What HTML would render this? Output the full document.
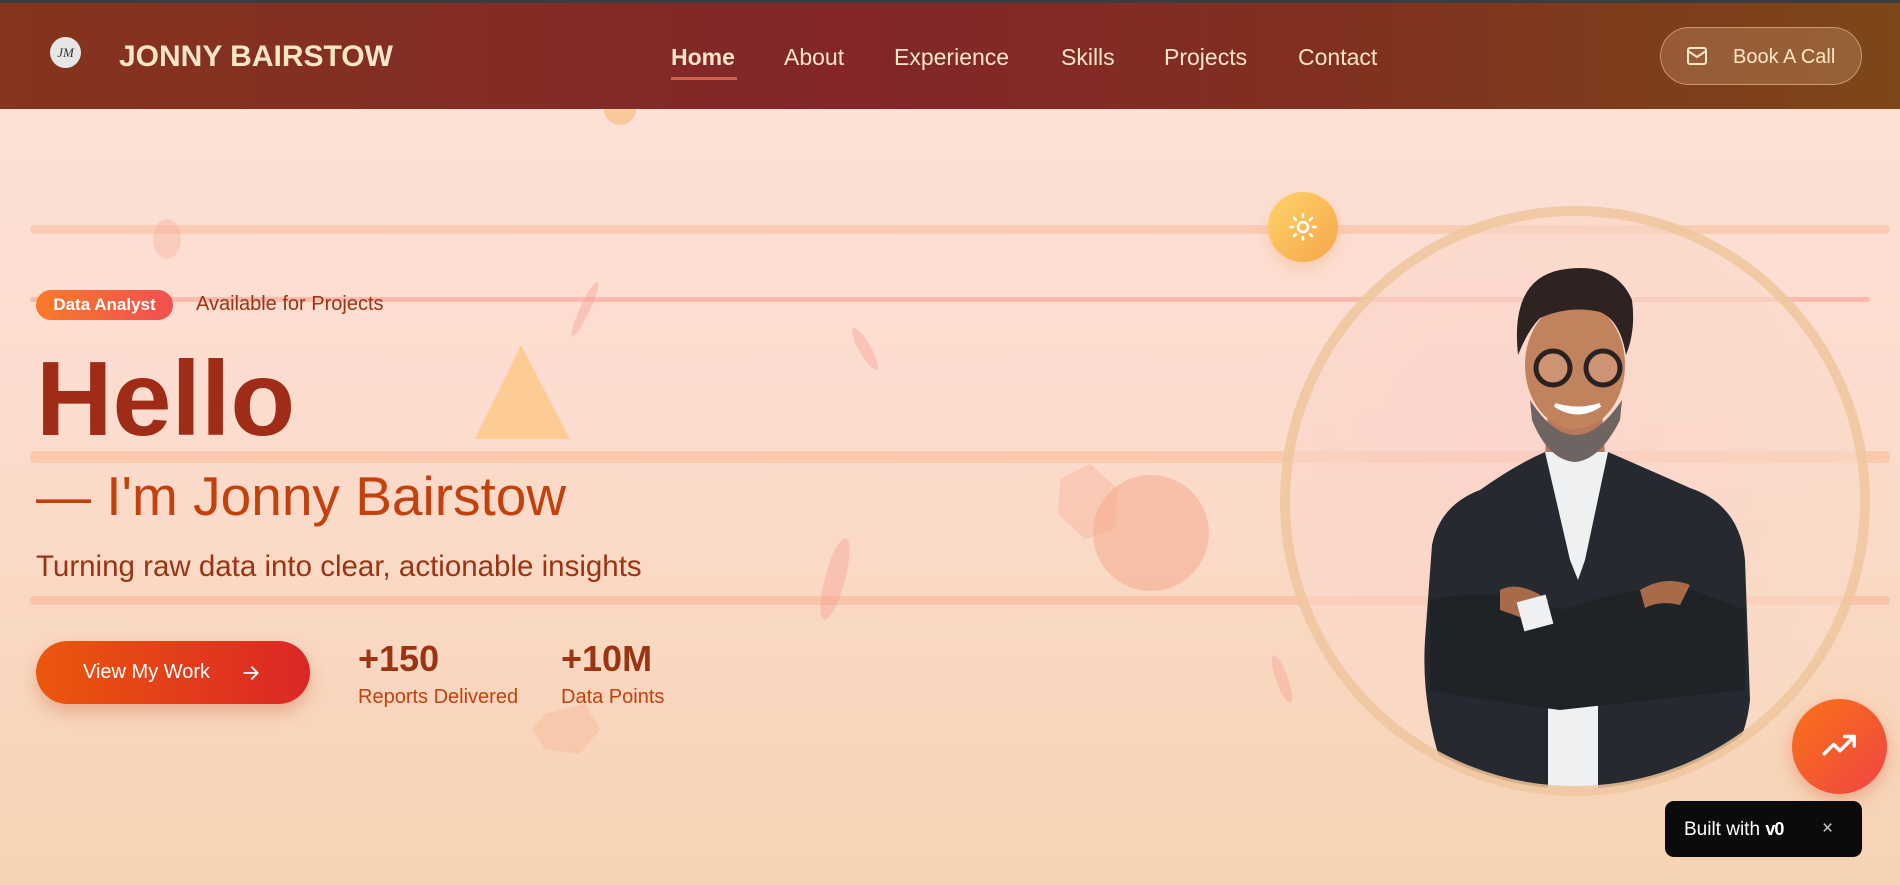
<!DOCTYPE html>
<html><head><meta charset="utf-8"><style>
*{margin:0;padding:0;box-sizing:border-box}
body{width:1900px;height:885px;overflow:hidden;font-family:"Liberation Sans",sans-serif;position:relative;background:linear-gradient(180deg,#fde2d8 0%,#fcdccf 45%,#f6d3b3 100%)}
.nav{position:absolute;left:0;top:0;width:1900px;height:109px;background:linear-gradient(90deg,#84351c 0%,#82262a 45%,#81301f 70%,#7c471a 100%);border-top:3px solid #3a3c40}
.nav .t{position:absolute;color:#fde6c6;font-size:23px;top:41px}
.ab{position:absolute}
.lh{line-height:1;white-space:nowrap}
.line{position:absolute;left:30px;height:9px;background:rgba(246,170,120,.35);border-radius:4px}
</style></head><body>
<div class="nav">
 <div class="ab" style="left:50px;top:34px;width:31px;height:31px;border-radius:50%;background:#e6e6e6;color:#333;font:italic 13px 'Liberation Serif',serif;text-align:center;line-height:31px">JM</div>
 <div class="ab" style="left:119px;top:37px;color:#fde6c6;font-size:30px;font-weight:bold">JONNY BAIRSTOW</div>
 <div class="t" style="left:671px;font-weight:bold">Home</div>
 <div class="ab" style="left:671px;top:74px;width:66px;height:3px;background:#d0614a"></div>
 <div class="t" style="left:784px">About</div>
 <div class="t" style="left:894px">Experience</div>
 <div class="t" style="left:1061px">Skills</div>
 <div class="t" style="left:1164px">Projects</div>
 <div class="t" style="left:1298px">Contact</div>
 <div class="ab" style="left:1660px;top:24px;width:202px;height:58px;border-radius:29px;background:rgba(255,210,170,.2);border:1px solid rgba(240,190,140,.6)">
  <svg class="ab" style="left:25px;top:18px" width="22" height="20" viewBox="0 0 22 20"><rect x="2" y="2" width="18" height="16" rx="2" fill="none" stroke="#fde6c6" stroke-width="2"/><path d="M2 5l9 6 9-6" fill="none" stroke="#fde6c6" stroke-width="2"/></svg>
  <div class="ab" style="left:72px;top:18px;color:#fde6c6;font-size:20px">Book A Call</div>
 </div>
</div>
<div class="line" style="top:225px;width:1860px"></div>
<div class="line" style="top:297px;height:5px;background:rgba(240,120,110,.35);width:1840px"></div>
<div class="line" style="top:451px;height:12px;width:1860px"></div>
<div class="line" style="top:596px;width:1860px;background:rgba(246,160,120,.35)"></div>
<svg class="ab" style="left:0;top:109px" width="1900" height="776">
 <polygon points="521,236 475,330 570,330" fill="#fbc98a" opacity=".85"/>
 <circle cx="1151" cy="424" r="58" fill="#f3a080" opacity=".45"/>
 <polygon points="1060,370 1090,355 1118,380 1115,420 1085,430 1058,405" fill="#f5a890" opacity=".35"/>
 <polygon points="545,605 585,595 600,620 580,645 545,640 532,620" fill="#f5b090" opacity=".35"/>
 <ellipse cx="585" cy="200" rx="5" ry="30" transform="rotate(25 585 200)" fill="#f5a090" opacity=".4"/>
 <ellipse cx="865" cy="240" rx="6" ry="24" transform="rotate(-30 865 240)" fill="#f5a090" opacity=".4"/>
 <ellipse cx="835" cy="470" rx="10" ry="42" transform="rotate(15 835 470)" fill="#f5a090" opacity=".4"/>
 <ellipse cx="1282" cy="570" rx="6" ry="25" transform="rotate(-20 1282 570)" fill="#f5a090" opacity=".4"/>
 <ellipse cx="167" cy="130" rx="14" ry="20" fill="#f5b0a0" opacity=".4"/>
 <circle cx="620" cy="0" r="16" fill="#f8b060" opacity=".5"/>
</svg>
<div class="ab" style="left:1268px;top:192px;width:70px;height:70px;border-radius:50%;background:linear-gradient(135deg,#fdd36a,#f7a64a);box-shadow:0 6px 14px rgba(240,160,80,.3)">
 <svg class="ab" style="left:20px;top:20px" width="30" height="30" viewBox="0 0 24 24" fill="none" stroke="#fff" stroke-width="2" stroke-linecap="round"><circle cx="12" cy="12" r="4"/><path d="M12 2v2M12 20v2M4.9 4.9l1.4 1.4M17.7 17.7l1.4 1.4M2 12h2M20 12h2M4.9 19.1l1.4-1.4M17.7 6.3l1.4-1.4"/></svg>
</div>
<svg class="ab" style="left:0;top:0" width="1900" height="885">
 <defs><clipPath id="c"><circle cx="1575" cy="501" r="288"/></clipPath>
 <radialGradient id="g" cx=".35" cy=".4" r=".7"><stop offset="0" stop-color="#fcd0cc"/><stop offset="1" stop-color="#f9dcc8"/></radialGradient></defs>
 <circle cx="1575" cy="501" r="290" fill="url(#g)" opacity=".6"/>
 <g clip-path="url(#c)">
  <path d="M1548,410 L1602,410 L1606,470 L1544,470Z" fill="#b9785a"/>
  <path d="M1480,490 Q1515,465 1545,452 L1608,452 Q1645,468 1690,488 Q1740,505 1745,560 L1750,700 Q1745,750 1705,800 L1455,800 Q1420,720 1425,640 L1432,545 Q1440,505 1480,490Z" fill="#262a30"/>
  <path d="M1545,452 L1608,452 L1585,560 L1578,580 L1570,560Z" fill="#eef0f2"/>
  <rect x="1548" y="700" width="50" height="100" fill="#eef0f2"/>
  <path d="M1430,600 Q1500,585 1560,610 Q1620,590 1680,585 L1745,610 L1745,690 Q1650,700 1560,710 Q1480,700 1430,690Z" fill="#1f2328"/>
  <path d="M1500,590 Q1520,580 1548,600 L1540,625 Q1515,615 1500,610Z" fill="#a86a48"/>
  <path d="M1640,590 Q1665,575 1690,585 L1680,605 Q1660,600 1645,608Z" fill="#a86a48"/>
  <rect x="1520" y="598" width="30" height="30" fill="#eef0f2" transform="rotate(-15 1535 613)"/>
 </g>
 <ellipse cx="1575" cy="365" rx="50" ry="64" fill="#c1825e"/>
 <path d="M1530,400 Q1575,470 1622,400 L1620,420 Q1600,460 1575,462 Q1548,460 1532,420Z" fill="#6e6462"/>
 <path d="M1518,355 Q1510,280 1560,270 Q1615,260 1632,300 Q1636,330 1626,355 Q1620,320 1600,312 Q1570,305 1540,318 Q1528,330 1518,355Z" fill="#2e2320"/>
 <circle cx="1553" cy="368" r="17" fill="rgba(255,220,200,.2)" stroke="#2a2220" stroke-width="5"/>
 <circle cx="1603" cy="368" r="17" fill="rgba(255,220,200,.2)" stroke="#2a2220" stroke-width="5"/>
 <path d="M1555,405 Q1578,420 1600,405 Q1578,412 1555,405Z" fill="#fff" stroke="#fff" stroke-width="4"/>
 <circle cx="1575" cy="501" r="290" fill="none" stroke="#f0c69e" stroke-width="10" opacity=".85"/>
</svg>
<div class="ab" style="left:36px;top:290px;width:137px;height:30px;border-radius:15px;background:linear-gradient(90deg,#f97a2a,#ef5050);color:#fff;font-weight:bold;font-size:17px;line-height:30px;text-align:center">Data Analyst</div>
<div class="ab" style="left:196px;top:293px;color:#9a3412;font-size:20px">Available for Projects</div>
<div class="ab lh" style="left:36px;top:346px;color:#9e2c17;font-size:106px;font-weight:bold">Hello</div>
<div class="ab lh" style="left:36px;top:469px;color:#c2410c;font-size:55px">— I'm Jonny Bairstow</div>
<div class="ab lh" style="left:36px;top:552px;color:#9a3412;font-size:29.5px">Turning raw data into clear, actionable insights</div>
<div class="ab" style="left:36px;top:641px;width:274px;height:63px;border-radius:32px;background:linear-gradient(90deg,#ea580c,#dc2626);box-shadow:0 8px 16px rgba(200,80,40,.3);color:#fff;font-size:20px;line-height:63px;padding-left:47px">View My Work
 <svg class="ab" style="left:205px;top:22px" width="20" height="20" viewBox="0 0 24 24" fill="none" stroke="#fff" stroke-width="2.2" stroke-linecap="round" stroke-linejoin="round"><path d="M4 12h16M13 5l7 7-7 7"/></svg></div>
<div class="ab" style="left:358px;top:638px;color:#9a3412;font-size:36px;font-weight:bold">+150</div>
<div class="ab" style="left:358px;top:686px;color:#c2410c;font-size:20px">Reports Delivered</div>
<div class="ab" style="left:561px;top:638px;color:#9a3412;font-size:36px;font-weight:bold">+10M</div>
<div class="ab" style="left:561px;top:686px;color:#c2410c;font-size:20px">Data Points</div>
<div class="ab" style="left:1792px;top:699px;width:95px;height:95px;border-radius:50%;background:linear-gradient(135deg,#f97316,#ef4444);box-shadow:0 6px 16px rgba(220,80,40,.35)">
 <svg class="ab" style="left:25px;top:28px" width="46" height="38" viewBox="0 0 24 24" fill="none" stroke="#fff" stroke-width="2.2" stroke-linecap="round" stroke-linejoin="round"><path d="M2 17l6-6 4 4 9-9"/><path d="M15 6h6v6"/></svg>
</div>
<div class="ab" style="left:1665px;top:801px;width:197px;height:56px;border-radius:9px;background:#0b0b0b;color:#fff;font-size:19px;line-height:56px;padding-left:19px">Built with <b style="font-size:18px;letter-spacing:-1px">v0</b><span style="position:absolute;left:157px;color:#ccc">×</span></div>
</body></html>
